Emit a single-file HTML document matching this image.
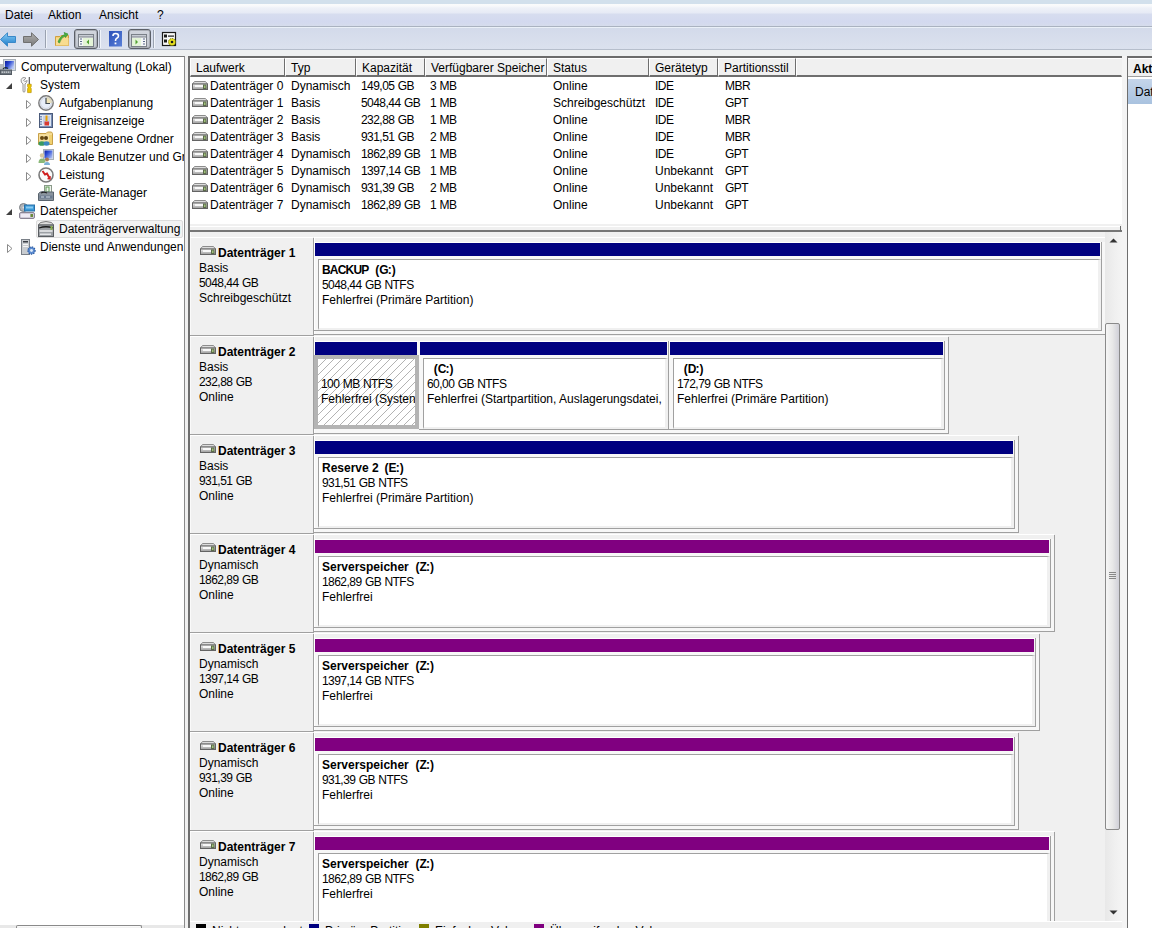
<!DOCTYPE html><html><head><meta charset="utf-8"><style>
*{margin:0;padding:0;box-sizing:border-box}
html,body{width:1152px;height:928px;overflow:hidden;background:#f0f0f0;font-family:"Liberation Sans", sans-serif;font-size:12px;color:#000}
.ab{position:absolute}
.t{position:absolute;white-space:nowrap;line-height:15px}
.b{font-weight:bold}
svg{position:absolute;overflow:visible}
</style></head><body>
<div class="ab" style="left:0px;top:0px;width:1152px;height:4px;background:#d2e0ec;"></div><div class="ab" style="left:0px;top:4px;width:1152px;height:22px;background:linear-gradient(#fafbfc 0px,#f8f9fb 2px,#eef1f8 4px,#e6eaf5 9px,#d7ddef 10px,#d3d9ef 18px,#d6dcec 22px);"></div><div class="ab" style="left:0px;top:26px;width:1152px;height:1px;background:#aab2c0;"></div><div class="ab" style="left:0px;top:27px;width:1152px;height:1px;background:#eaf0f8;"></div><div class="ab" style="left:0px;top:28px;width:1152px;height:21px;background:linear-gradient(#d3daea,#dbe1ee);"></div><div class="ab" style="left:0px;top:49px;width:1152px;height:1px;background:#b6becc;"></div><div class="ab" style="left:0px;top:50px;width:1152px;height:6px;background:#eef0f1;"></div><div class="t" style="left:5px;top:8px;">Datei</div><div class="t" style="left:48px;top:8px;">Aktion</div><div class="t" style="left:99px;top:8px;">Ansicht</div><div class="t" style="left:157px;top:8px;">?</div><svg style="left:0px;top:32px" width="16" height="15" viewBox="0 0 16 15"><defs><linearGradient id="bk" x1="0" y1="0" x2="0" y2="1"><stop offset="0" stop-color="#8ad0f8"/><stop offset="1" stop-color="#1a78c8"/></linearGradient></defs>
<path d="M0.5 7.5 L7.5 0.8 V4.5 H15.5 V10.5 H7.5 V14.2 Z" fill="url(#bk)" stroke="#3a88c8" stroke-width="1"/></svg><svg style="left:23px;top:32px" width="16" height="15" viewBox="0 0 16 15"><defs><linearGradient id="fw" x1="0" y1="0" x2="0" y2="1"><stop offset="0" stop-color="#b0b0b0"/><stop offset="1" stop-color="#7a7a7a"/></linearGradient></defs>
<path d="M15.5 7.5 L8.5 0.8 V4.5 H0.5 V10.5 H8.5 V14.2 Z" fill="url(#fw)" stroke="#707070" stroke-width="1"/></svg><div class="ab" style="left:45px;top:30px;width:1px;height:18px;background:#9aa2b0;box-shadow:1px 0 0 #f0f4fa"></div><svg style="left:55px;top:32px" width="14" height="14" viewBox="0 0 14 14"><path d="M0.5 4.5 H5 L6 3.5 H13.5 V13.5 H0.5 Z" fill="#f4d078" stroke="#d0a040"/>
<rect x="1" y="6" width="12.5" height="7.5" fill="#f8dc90"/>
<path d="M3 10 Q5 4 10 2.5 L9 0.5 L13 2 L10.5 5.5 L10 4 Q6 5.5 4.5 11 Z" fill="#4ab040" stroke="#2a8a2a" stroke-width="0.6"/></svg><div class="ab" style="left:74px;top:29px;width:24px;height:20px;background:linear-gradient(#d2d6de,#bfc4cd);border:1px solid #5c6068;border-radius:3px;box-shadow:inset 0 0 0 1px #a8acb4"></div><svg style="left:78px;top:34px" width="16" height="13" viewBox="0 0 16 13"><rect x="0.5" y="0.5" width="15" height="12" fill="#f4f6f8" stroke="#7a8088"/><rect x="0.5" y="0.5" width="15" height="2.5" fill="#c8ccd4" stroke="#7a8088"/>
<rect x="5" y="4" width="10" height="8" fill="#e4f4d8"/><path d="M8.5 8 L11 5.5 V10.5 Z" fill="#50a030"/>
<path d="M2 5 H4 M2 7.5 H4 M2 10 H4" stroke="#5a6a8a" stroke-width="1.2"/></svg><div class="ab" style="left:99px;top:30px;width:1px;height:18px;background:#9aa2b0;box-shadow:1px 0 0 #f0f4fa"></div><svg style="left:109px;top:31px" width="13" height="16" viewBox="0 0 13 16"><defs><linearGradient id="hl" x1="0" y1="0" x2="1" y2="1"><stop offset="0" stop-color="#2a50b8"/><stop offset="1" stop-color="#5a80d8"/></linearGradient></defs>
<rect x="0" y="0" width="13" height="15.5" fill="url(#hl)"/><path d="M4 5 Q4 2.5 6.5 2.5 Q9.5 2.5 9.5 5 Q9.5 6.5 7.5 7.5 Q6.5 8 6.5 10" fill="none" stroke="#fff" stroke-width="1.6"/><rect x="5.6" y="11.5" width="1.8" height="1.8" fill="#fff"/></svg><div class="ab" style="left:128px;top:29px;width:23px;height:20px;background:linear-gradient(#d2d6de,#bfc4cd);border:1px solid #5c6068;border-radius:3px;box-shadow:inset 0 0 0 1px #a8acb4"></div><svg style="left:131px;top:34px" width="16" height="13" viewBox="0 0 16 13"><rect x="0.5" y="0.5" width="15" height="12" fill="#f4f6f8" stroke="#7a8088"/><rect x="0.5" y="0.5" width="15" height="2.5" fill="#c8ccd4" stroke="#7a8088"/>
<rect x="1" y="4" width="9" height="8" fill="#e4f4d8"/><path d="M4.5 5.5 L7 8 L4.5 10.5 Z" fill="#50a030"/>
<path d="M12 5 H14 M12 7.5 H14 M12 10 H14" stroke="#5a6a8a" stroke-width="1.2"/></svg><div class="ab" style="left:153px;top:30px;width:1px;height:18px;background:#9aa2b0;box-shadow:1px 0 0 #f0f4fa"></div><svg style="left:162px;top:32px" width="15" height="15" viewBox="0 0 15 15"><rect x="0.5" y="0.5" width="13" height="13" fill="#f8f8f8" stroke="#1a1a1a" stroke-width="1.2"/>
<rect x="2" y="2.5" width="3" height="3" fill="#1a1a1a"/><rect x="6" y="3.5" width="6" height="1.2" fill="#1a1a1a"/>
<rect x="2" y="7.5" width="3" height="3" fill="#1a1a1a"/>
<circle cx="10" cy="10" r="3.5" fill="#e8e020" stroke="#6a6a00" stroke-width="1" stroke-dasharray="1.2 0.8"/><circle cx="10" cy="10" r="1.3" fill="#1a1a1a"/></svg><div class="ab" style="left:0px;top:56px;width:185px;height:872px;background:#fff;border-top:1px solid #7a7a7a;border-right:1px solid #8a8a8a"></div><div class="ab" style="left:36px;top:220px;width:147px;height:18px;background:#f3f3f3;border:1px solid #dcdcdc;border-radius:2px"></div><div class="ab" style="left:0;top:57px;width:184px;height:871px;overflow:hidden"><div class="t" style="left:21px;top:3px;">Computerverwaltung (Lokal)</div><svg style="left:0px;top:2px" width="16" height="16" viewBox="0 0 16 16"><defs><linearGradient id="scr" x1="0" y1="0" x2="1" y2="0.6"><stop offset="0" stop-color="#0c1c98"/><stop offset="0.45" stop-color="#2a48d0"/><stop offset="1" stop-color="#b8c8f4"/></linearGradient></defs>
<rect x="3.5" y="0.5" width="12" height="11" fill="#d4dce4" stroke="#a8b0b8"/>
<rect x="5" y="2" width="9" height="8" fill="url(#scr)"/>
<rect x="0" y="5" width="3" height="6" fill="#b8bcc0"/>
<path d="M3 10 Q5 7.5 8 9.5" fill="none" stroke="#1a2a30" stroke-width="1.2"/>
<rect x="0.5" y="11" width="11" height="4.5" fill="#6c747c" stroke="#545c64"/><path d="M1.5 13.2 H10.5" stroke="#d8dce0" stroke-width="1.2" stroke-dasharray="1.5 0.6"/></svg><div class="t" style="left:40px;top:21px;">System</div><svg style="left:20px;top:20px" width="16" height="16" viewBox="0 0 16 16"><path d="M2.5 0.8 Q0.3 2.5 1.3 5 Q2 6.3 3 7 V14.5 Q4 15.8 5 14.5 V7 Q7 5.8 7.2 3.5 L4.8 4.6 L3.6 3.2 L6 1.2 Q4.2 0 2.5 0.8 Z" fill="#f6f6f6" stroke="#8c8c8c" stroke-width="0.9"/>

<rect x="8.7" y="0" width="1.3" height="7.5" fill="#6a6a6a"/>
<path d="M7.6 7.2 H11.2 V9.6 L10.6 10.6 L11.2 11.6 V15.6 H7.6 V11.6 L8.2 10.6 L7.6 9.6 Z" fill="#f0c800" stroke="#b89000" stroke-width="0.7"/></svg><svg style="left:6px;top:26px" width="6" height="6"><path d="M6 0 L6 6 L0 6 Z" fill="#404040"/></svg><div class="t" style="left:59px;top:39px;">Aufgabenplanung</div><svg style="left:38px;top:38px" width="16" height="16" viewBox="0 0 16 16"><circle cx="8" cy="8" r="7.2" fill="#e8eef8" stroke="#7a7a7a" stroke-width="1.4"/>
<path d="M8 1.5 A6.5 6.5 0 0 1 14.5 8 L8 8 Z" fill="#f0e0a8" opacity="0.8"/>
<circle cx="8" cy="8" r="5.5" fill="none" stroke="#c8ccd4" stroke-width="0.8"/>
<path d="M8 3 V8.5 H12" fill="none" stroke="#404a50" stroke-width="1.2"/></svg><svg style="left:26px;top:43px" width="6" height="9"><path d="M0.5 0.5 L5 4.5 L0.5 8.5 Z" fill="#fff" stroke="#8a8a8a" stroke-width="1"/></svg><div class="t" style="left:59px;top:57px;">Ereignisanzeige</div><svg style="left:38px;top:56px" width="16" height="16" viewBox="0 0 16 16"><rect x="1.5" y="0.5" width="13" height="14" fill="#7a90b8" stroke="#4a5a7a"/>
<rect x="4" y="2" width="9" height="11" fill="#dfe6f2"/>
<path d="M2 2.5 H4 M2 5 H4 M2 7.5 H4 M2 10 H4 M2 12.5 H4" stroke="#e8ecf4" stroke-width="1"/>
<path d="M5 4 H12 M5 6 H12 M5 8 H12 M5 10 H12" stroke="#9aaad0" stroke-width="0.8"/>
<path d="M8.5 2.5 V8" stroke="#e8a000" stroke-width="2"/><rect x="6.5" y="8.5" width="4.5" height="4" fill="#d83a30"/></svg><svg style="left:26px;top:61px" width="6" height="9"><path d="M0.5 0.5 L5 4.5 L0.5 8.5 Z" fill="#fff" stroke="#8a8a8a" stroke-width="1"/></svg><div class="t" style="left:59px;top:75px;">Freigegebene Ordner</div><svg style="left:38px;top:74px" width="16" height="16" viewBox="0 0 16 16"><path d="M0.5 2.5 H8 L9.5 1 H13.5 L14.5 2.5 V13.5 H0.5 Z" fill="#f2d88c" stroke="#c8a048"/>
<rect x="1" y="3.5" width="13" height="9.5" fill="#f6e0a0"/><rect x="11" y="4" width="3" height="9" fill="#f0d070"/>
<circle cx="4" cy="7" r="2" fill="#6a4a10"/><circle cx="8" cy="7" r="2" fill="#5a4010"/>
<ellipse cx="3.8" cy="12.5" rx="3.3" ry="2.3" fill="#3a9a60"/><ellipse cx="8.5" cy="12.5" rx="3" ry="2.2" fill="#3a88c0"/></svg><svg style="left:26px;top:79px" width="6" height="9"><path d="M0.5 0.5 L5 4.5 L0.5 8.5 Z" fill="#fff" stroke="#8a8a8a" stroke-width="1"/></svg><div class="t" style="left:59px;top:93px;">Lokale Benutzer und Gruppen</div><svg style="left:38px;top:92px" width="16" height="16" viewBox="0 0 16 16"><defs><linearGradient id="scr2" x1="0" y1="0" x2="1" y2="0.8"><stop offset="0" stop-color="#0c1c98"/><stop offset="0.4" stop-color="#3050d8"/><stop offset="1" stop-color="#b0c0f0"/></linearGradient></defs>
<rect x="5.5" y="0.5" width="10" height="10" fill="#dfe4ea" stroke="#a8b0b8"/>
<rect x="6.5" y="1.5" width="8" height="8" fill="url(#scr2)"/>
<circle cx="4" cy="6.5" r="2.2" fill="#d8c8a0"/><path d="M0.5 14 Q0.5 9.5 4 9.5 Q7 9.5 7.5 13 L6 14 Z" fill="#8ab878"/>
<circle cx="9" cy="10.5" r="2" fill="#a87850"/><path d="M6 16 Q6 13 9 13 Q12 13 12 16 Z" fill="#7ab0d8"/></svg><svg style="left:26px;top:97px" width="6" height="9"><path d="M0.5 0.5 L5 4.5 L0.5 8.5 Z" fill="#fff" stroke="#8a8a8a" stroke-width="1"/></svg><div class="t" style="left:59px;top:111px;">Leistung</div><svg style="left:38px;top:110px" width="16" height="16" viewBox="0 0 16 16"><circle cx="8" cy="8" r="7" fill="#fafafa" stroke="#7a7a7a" stroke-width="1.6"/>
<path d="M4.5 4 L7 7.5 L9 6.5 L11.5 11" fill="none" stroke="#d02020" stroke-width="2"/>
<path d="M9.5 11.5 L12 12 L12 9" fill="none" stroke="#d02020" stroke-width="1.4"/></svg><svg style="left:26px;top:115px" width="6" height="9"><path d="M0.5 0.5 L5 4.5 L0.5 8.5 Z" fill="#fff" stroke="#8a8a8a" stroke-width="1"/></svg><div class="t" style="left:59px;top:129px;">Geräte-Manager</div><svg style="left:38px;top:128px" width="16" height="16" viewBox="0 0 16 16"><rect x="6.5" y="0.5" width="7" height="8" fill="#f0f4ee" stroke="#8a9a8a"/><rect x="8" y="2" width="3" height="5" fill="none" stroke="#5a9a50" stroke-width="1"/>
<path d="M0.5 8.5 Q3 5.5 8 7 H15.5 V15.5 H0.5 Z" fill="#8a949e" stroke="#5a646e"/>
<rect x="1.5" y="10.5" width="13" height="3" fill="#6a7a90"/><path d="M3 12 H6 M8 12 H12" stroke="#d0d8e0" stroke-width="1"/>
<path d="M3 8 Q6 6.5 9 8" fill="none" stroke="#202020" stroke-width="1.2"/></svg><div class="t" style="left:40px;top:147px;">Datenspeicher</div><svg style="left:19px;top:146px" width="16" height="16" viewBox="0 0 16 16"><circle cx="4.5" cy="4.5" r="4" fill="#b0b4b8" stroke="#7a7e84"/><circle cx="4.5" cy="4.5" r="1" fill="#e0e0e0"/>
<rect x="5.5" y="2" width="10" height="6" fill="#3a9ad8" stroke="#2a70a8"/><rect x="7" y="3.5" width="7" height="2" fill="#8acaf0"/>
<rect x="0.5" y="9.5" width="15" height="6" rx="1.5" fill="#cfcad8" stroke="#8a8494"/><rect x="2" y="11" width="9" height="3" fill="#eeeaf4"/><rect x="11.5" y="11" width="2.5" height="3" fill="#6a8a3a"/></svg><svg style="left:6px;top:152px" width="6" height="6"><path d="M6 0 L6 6 L0 6 Z" fill="#404040"/></svg><div class="t" style="left:59px;top:165px;">Datenträgerverwaltung</div><svg style="left:38px;top:164px" width="16" height="16" viewBox="0 0 16 16"><path d="M2.5 1.5 Q8 -0.5 13.5 1.5 L15.5 4 H0.5 Z" fill="#dcdcdc" stroke="#7a7a7a"/>
<rect x="0.5" y="4" width="15" height="11.5" fill="#9ca0a4" stroke="#5a5e62"/>
<path d="M1 7 Q8 4.5 15 7" fill="none" stroke="#1a1a1a" stroke-width="1.3"/>
<rect x="1.5" y="9" width="13" height="2" fill="#d8dadc"/><rect x="2" y="12.5" width="11" height="1.5" fill="#e4e6e8"/>
<rect x="12.5" y="5" width="2" height="4" fill="#8ab050"/></svg><div class="t" style="left:40px;top:183px;">Dienste und Anwendungen</div><svg style="left:20px;top:182px" width="16" height="16" viewBox="0 0 16 16"><rect x="1.5" y="0.5" width="8" height="15" fill="#c8ccd0" stroke="#7a8088"/>
<rect x="3" y="2" width="5" height="1.5" fill="#3a3e44"/><rect x="3" y="5" width="5" height="1" fill="#f4f4f4"/><rect x="3" y="7" width="5" height="1" fill="#f4f4f4"/>
<circle cx="11.5" cy="11.5" r="3.6" fill="#5a8ad0" stroke="#2a5aa0" stroke-width="1.2" stroke-dasharray="1.4 1"/><circle cx="11.5" cy="11.5" r="1.4" fill="#e0ecf8"/></svg><svg style="left:7px;top:187px" width="6" height="9"><path d="M0.5 0.5 L5 4.5 L0.5 8.5 Z" fill="#fff" stroke="#8a8a8a" stroke-width="1"/></svg></div><div class="ab" style="left:188px;top:56px;width:934px;height:872px;background:#f0f0f0;border-left:2px solid #6e6e6e"></div><div class="ab" style="left:190px;top:232px;width:1px;height:689px;background:#fafafa;"></div><div class="ab" style="left:188px;top:56px;width:934px;height:2px;background:#6b6b6b;"></div><div class="ab" style="left:190px;top:58px;width:932px;height:166px;background:#fff;"></div><div class="ab" style="left:190px;top:58px;width:95px;height:19px;background:#f0f0f0;border-top:1px solid #fff;border-left:1px solid #fff;border-right:1px solid #6e6e6e;border-bottom:2px solid #6e6e6e"></div><div class="t" style="left:196px;top:61px;">Laufwerk</div><div class="ab" style="left:285px;top:58px;width:71px;height:19px;background:#f0f0f0;border-top:1px solid #fff;border-left:1px solid #fff;border-right:1px solid #6e6e6e;border-bottom:2px solid #6e6e6e"></div><div class="t" style="left:291px;top:61px;">Typ</div><div class="ab" style="left:356px;top:58px;width:69px;height:19px;background:#f0f0f0;border-top:1px solid #fff;border-left:1px solid #fff;border-right:1px solid #6e6e6e;border-bottom:2px solid #6e6e6e"></div><div class="t" style="left:362px;top:61px;">Kapazität</div><div class="ab" style="left:425px;top:58px;width:122px;height:19px;background:#f0f0f0;border-top:1px solid #fff;border-left:1px solid #fff;border-right:1px solid #6e6e6e;border-bottom:2px solid #6e6e6e"></div><div class="t" style="left:431px;top:61px;">Verfügbarer Speicher</div><div class="ab" style="left:547px;top:58px;width:102px;height:19px;background:#f0f0f0;border-top:1px solid #fff;border-left:1px solid #fff;border-right:1px solid #6e6e6e;border-bottom:2px solid #6e6e6e"></div><div class="t" style="left:553px;top:61px;">Status</div><div class="ab" style="left:649px;top:58px;width:69px;height:19px;background:#f0f0f0;border-top:1px solid #fff;border-left:1px solid #fff;border-right:1px solid #6e6e6e;border-bottom:2px solid #6e6e6e"></div><div class="t" style="left:655px;top:61px;">Gerätetyp</div><div class="ab" style="left:718px;top:58px;width:78px;height:19px;background:#f0f0f0;border-top:1px solid #fff;border-left:1px solid #fff;border-right:1px solid #6e6e6e;border-bottom:2px solid #6e6e6e"></div><div class="t" style="left:724px;top:61px;">Partitionsstil</div><div class="ab" style="left:796px;top:58px;width:326px;height:19px;background:#f0f0f0;border-top:1px solid #fff;border-left:1px solid #fff;border-right:1px solid #f0f0f0;border-bottom:2px solid #6e6e6e"></div><svg style="left:192px;top:81px" width="16" height="10"><defs><linearGradient id="dg" x1="0" y1="0" x2="0" y2="1"><stop offset="0" stop-color="#f4f4f4"/><stop offset="1" stop-color="#9a9a9a"/></linearGradient></defs>
<path d="M2.5 0.5 H13.5 L15.5 3 H0.5 Z" fill="#dcdcdc" stroke="#8c8c8c"/>
<rect x="0.5" y="3" width="15" height="5.5" fill="url(#dg)" stroke="#646464"/>
<rect x="3" y="4" width="8" height="2" fill="#f8f8f8"/>
<rect x="11" y="3.5" width="3.5" height="4.5" fill="#5b6b4a"/><rect x="12" y="4.5" width="1.5" height="2.5" fill="#9fbf7a"/></svg><div class="t" style="left:210px;top:79px;">Datenträger <span style="letter-spacing:-0.55px">0</span></div><div class="t" style="left:291px;top:79px;">Dynamisch</div><div class="t" style="left:361px;top:79px;"><span style="letter-spacing:-0.55px">149,05</span> <span style="letter-spacing:-0.55px">GB</span></div><div class="t" style="left:430px;top:79px;"><span style="letter-spacing:-0.55px">3</span> <span style="letter-spacing:-0.55px">MB</span></div><div class="t" style="left:553px;top:79px;">Online</div><div class="t" style="left:655px;top:79px;"><span style="letter-spacing:-0.55px">IDE</span></div><div class="t" style="left:725px;top:79px;"><span style="letter-spacing:-0.55px">MBR</span></div><svg style="left:192px;top:98px" width="16" height="10"><defs><linearGradient id="dg" x1="0" y1="0" x2="0" y2="1"><stop offset="0" stop-color="#f4f4f4"/><stop offset="1" stop-color="#9a9a9a"/></linearGradient></defs>
<path d="M2.5 0.5 H13.5 L15.5 3 H0.5 Z" fill="#dcdcdc" stroke="#8c8c8c"/>
<rect x="0.5" y="3" width="15" height="5.5" fill="url(#dg)" stroke="#646464"/>
<rect x="3" y="4" width="8" height="2" fill="#f8f8f8"/>
<rect x="11" y="3.5" width="3.5" height="4.5" fill="#5b6b4a"/><rect x="12" y="4.5" width="1.5" height="2.5" fill="#9fbf7a"/></svg><div class="t" style="left:210px;top:96px;">Datenträger <span style="letter-spacing:-0.55px">1</span></div><div class="t" style="left:291px;top:96px;">Basis</div><div class="t" style="left:361px;top:96px;"><span style="letter-spacing:-0.55px">5048,44</span> <span style="letter-spacing:-0.55px">GB</span></div><div class="t" style="left:430px;top:96px;"><span style="letter-spacing:-0.55px">1</span> <span style="letter-spacing:-0.55px">MB</span></div><div class="t" style="left:553px;top:96px;">Schreibgeschützt</div><div class="t" style="left:655px;top:96px;"><span style="letter-spacing:-0.55px">IDE</span></div><div class="t" style="left:725px;top:96px;"><span style="letter-spacing:-0.55px">GPT</span></div><svg style="left:192px;top:115px" width="16" height="10"><defs><linearGradient id="dg" x1="0" y1="0" x2="0" y2="1"><stop offset="0" stop-color="#f4f4f4"/><stop offset="1" stop-color="#9a9a9a"/></linearGradient></defs>
<path d="M2.5 0.5 H13.5 L15.5 3 H0.5 Z" fill="#dcdcdc" stroke="#8c8c8c"/>
<rect x="0.5" y="3" width="15" height="5.5" fill="url(#dg)" stroke="#646464"/>
<rect x="3" y="4" width="8" height="2" fill="#f8f8f8"/>
<rect x="11" y="3.5" width="3.5" height="4.5" fill="#5b6b4a"/><rect x="12" y="4.5" width="1.5" height="2.5" fill="#9fbf7a"/></svg><div class="t" style="left:210px;top:113px;">Datenträger <span style="letter-spacing:-0.55px">2</span></div><div class="t" style="left:291px;top:113px;">Basis</div><div class="t" style="left:361px;top:113px;"><span style="letter-spacing:-0.55px">232,88</span> <span style="letter-spacing:-0.55px">GB</span></div><div class="t" style="left:430px;top:113px;"><span style="letter-spacing:-0.55px">1</span> <span style="letter-spacing:-0.55px">MB</span></div><div class="t" style="left:553px;top:113px;">Online</div><div class="t" style="left:655px;top:113px;"><span style="letter-spacing:-0.55px">IDE</span></div><div class="t" style="left:725px;top:113px;"><span style="letter-spacing:-0.55px">MBR</span></div><svg style="left:192px;top:132px" width="16" height="10"><defs><linearGradient id="dg" x1="0" y1="0" x2="0" y2="1"><stop offset="0" stop-color="#f4f4f4"/><stop offset="1" stop-color="#9a9a9a"/></linearGradient></defs>
<path d="M2.5 0.5 H13.5 L15.5 3 H0.5 Z" fill="#dcdcdc" stroke="#8c8c8c"/>
<rect x="0.5" y="3" width="15" height="5.5" fill="url(#dg)" stroke="#646464"/>
<rect x="3" y="4" width="8" height="2" fill="#f8f8f8"/>
<rect x="11" y="3.5" width="3.5" height="4.5" fill="#5b6b4a"/><rect x="12" y="4.5" width="1.5" height="2.5" fill="#9fbf7a"/></svg><div class="t" style="left:210px;top:130px;">Datenträger <span style="letter-spacing:-0.55px">3</span></div><div class="t" style="left:291px;top:130px;">Basis</div><div class="t" style="left:361px;top:130px;"><span style="letter-spacing:-0.55px">931,51</span> <span style="letter-spacing:-0.55px">GB</span></div><div class="t" style="left:430px;top:130px;"><span style="letter-spacing:-0.55px">2</span> <span style="letter-spacing:-0.55px">MB</span></div><div class="t" style="left:553px;top:130px;">Online</div><div class="t" style="left:655px;top:130px;"><span style="letter-spacing:-0.55px">IDE</span></div><div class="t" style="left:725px;top:130px;"><span style="letter-spacing:-0.55px">MBR</span></div><svg style="left:192px;top:149px" width="16" height="10"><defs><linearGradient id="dg" x1="0" y1="0" x2="0" y2="1"><stop offset="0" stop-color="#f4f4f4"/><stop offset="1" stop-color="#9a9a9a"/></linearGradient></defs>
<path d="M2.5 0.5 H13.5 L15.5 3 H0.5 Z" fill="#dcdcdc" stroke="#8c8c8c"/>
<rect x="0.5" y="3" width="15" height="5.5" fill="url(#dg)" stroke="#646464"/>
<rect x="3" y="4" width="8" height="2" fill="#f8f8f8"/>
<rect x="11" y="3.5" width="3.5" height="4.5" fill="#5b6b4a"/><rect x="12" y="4.5" width="1.5" height="2.5" fill="#9fbf7a"/></svg><div class="t" style="left:210px;top:147px;">Datenträger <span style="letter-spacing:-0.55px">4</span></div><div class="t" style="left:291px;top:147px;">Dynamisch</div><div class="t" style="left:361px;top:147px;"><span style="letter-spacing:-0.55px">1862,89</span> <span style="letter-spacing:-0.55px">GB</span></div><div class="t" style="left:430px;top:147px;"><span style="letter-spacing:-0.55px">1</span> <span style="letter-spacing:-0.55px">MB</span></div><div class="t" style="left:553px;top:147px;">Online</div><div class="t" style="left:655px;top:147px;"><span style="letter-spacing:-0.55px">IDE</span></div><div class="t" style="left:725px;top:147px;"><span style="letter-spacing:-0.55px">GPT</span></div><svg style="left:192px;top:166px" width="16" height="10"><defs><linearGradient id="dg" x1="0" y1="0" x2="0" y2="1"><stop offset="0" stop-color="#f4f4f4"/><stop offset="1" stop-color="#9a9a9a"/></linearGradient></defs>
<path d="M2.5 0.5 H13.5 L15.5 3 H0.5 Z" fill="#dcdcdc" stroke="#8c8c8c"/>
<rect x="0.5" y="3" width="15" height="5.5" fill="url(#dg)" stroke="#646464"/>
<rect x="3" y="4" width="8" height="2" fill="#f8f8f8"/>
<rect x="11" y="3.5" width="3.5" height="4.5" fill="#5b6b4a"/><rect x="12" y="4.5" width="1.5" height="2.5" fill="#9fbf7a"/></svg><div class="t" style="left:210px;top:164px;">Datenträger <span style="letter-spacing:-0.55px">5</span></div><div class="t" style="left:291px;top:164px;">Dynamisch</div><div class="t" style="left:361px;top:164px;"><span style="letter-spacing:-0.55px">1397,14</span> <span style="letter-spacing:-0.55px">GB</span></div><div class="t" style="left:430px;top:164px;"><span style="letter-spacing:-0.55px">1</span> <span style="letter-spacing:-0.55px">MB</span></div><div class="t" style="left:553px;top:164px;">Online</div><div class="t" style="left:655px;top:164px;">Unbekannt</div><div class="t" style="left:725px;top:164px;"><span style="letter-spacing:-0.55px">GPT</span></div><svg style="left:192px;top:183px" width="16" height="10"><defs><linearGradient id="dg" x1="0" y1="0" x2="0" y2="1"><stop offset="0" stop-color="#f4f4f4"/><stop offset="1" stop-color="#9a9a9a"/></linearGradient></defs>
<path d="M2.5 0.5 H13.5 L15.5 3 H0.5 Z" fill="#dcdcdc" stroke="#8c8c8c"/>
<rect x="0.5" y="3" width="15" height="5.5" fill="url(#dg)" stroke="#646464"/>
<rect x="3" y="4" width="8" height="2" fill="#f8f8f8"/>
<rect x="11" y="3.5" width="3.5" height="4.5" fill="#5b6b4a"/><rect x="12" y="4.5" width="1.5" height="2.5" fill="#9fbf7a"/></svg><div class="t" style="left:210px;top:181px;">Datenträger <span style="letter-spacing:-0.55px">6</span></div><div class="t" style="left:291px;top:181px;">Dynamisch</div><div class="t" style="left:361px;top:181px;"><span style="letter-spacing:-0.55px">931,39</span> <span style="letter-spacing:-0.55px">GB</span></div><div class="t" style="left:430px;top:181px;"><span style="letter-spacing:-0.55px">2</span> <span style="letter-spacing:-0.55px">MB</span></div><div class="t" style="left:553px;top:181px;">Online</div><div class="t" style="left:655px;top:181px;">Unbekannt</div><div class="t" style="left:725px;top:181px;"><span style="letter-spacing:-0.55px">GPT</span></div><svg style="left:192px;top:200px" width="16" height="10"><defs><linearGradient id="dg" x1="0" y1="0" x2="0" y2="1"><stop offset="0" stop-color="#f4f4f4"/><stop offset="1" stop-color="#9a9a9a"/></linearGradient></defs>
<path d="M2.5 0.5 H13.5 L15.5 3 H0.5 Z" fill="#dcdcdc" stroke="#8c8c8c"/>
<rect x="0.5" y="3" width="15" height="5.5" fill="url(#dg)" stroke="#646464"/>
<rect x="3" y="4" width="8" height="2" fill="#f8f8f8"/>
<rect x="11" y="3.5" width="3.5" height="4.5" fill="#5b6b4a"/><rect x="12" y="4.5" width="1.5" height="2.5" fill="#9fbf7a"/></svg><div class="t" style="left:210px;top:198px;">Datenträger <span style="letter-spacing:-0.55px">7</span></div><div class="t" style="left:291px;top:198px;">Dynamisch</div><div class="t" style="left:361px;top:198px;"><span style="letter-spacing:-0.55px">1862,89</span> <span style="letter-spacing:-0.55px">GB</span></div><div class="t" style="left:430px;top:198px;"><span style="letter-spacing:-0.55px">1</span> <span style="letter-spacing:-0.55px">MB</span></div><div class="t" style="left:553px;top:198px;">Online</div><div class="t" style="left:655px;top:198px;">Unbekannt</div><div class="t" style="left:725px;top:198px;"><span style="letter-spacing:-0.55px">GPT</span></div><div class="ab" style="left:190px;top:224px;width:932px;height:7px;background:#f0f0f0;"></div><div class="ab" style="left:190px;top:226px;width:931px;height:1px;background:#fff;"></div><div class="ab" style="left:190px;top:230px;width:932px;height:2px;background:#767676;"></div><div class="ab" style="left:1120px;top:226px;width:1px;height:5px;background:#6e6e6e;"></div><div class="ab" style="left:190px;top:232px;width:915px;height:689px;overflow:hidden"><div class="ab" style="left:0px;top:5px;width:123px;height:1px;background:#fff;"></div><div class="ab" style="left:0px;top:103px;width:124px;height:1px;background:#a0a0a0;"></div><div class="ab" style="left:123px;top:6px;width:1px;height:97px;background:#a0a0a0;"></div><svg style="left:10px;top:14px" width="16" height="10"><defs><linearGradient id="dg" x1="0" y1="0" x2="0" y2="1"><stop offset="0" stop-color="#f4f4f4"/><stop offset="1" stop-color="#9a9a9a"/></linearGradient></defs>
<path d="M2.5 0.5 H13.5 L15.5 3 H0.5 Z" fill="#dcdcdc" stroke="#8c8c8c"/>
<rect x="0.5" y="3" width="15" height="5.5" fill="url(#dg)" stroke="#646464"/>
<rect x="3" y="4" width="8" height="2" fill="#f8f8f8"/>
<rect x="11" y="3.5" width="3.5" height="4.5" fill="#5b6b4a"/><rect x="12" y="4.5" width="1.5" height="2.5" fill="#9fbf7a"/></svg><div class="t b" style="left:28px;top:14px;">Datenträger <span style="letter-spacing:-0.8px">1</span></div><div class="t" style="left:9px;top:29px;">Basis</div><div class="t" style="left:9px;top:44px;"><span style="letter-spacing:-0.55px">5048,44</span> <span style="letter-spacing:-0.55px">GB</span></div><div class="t" style="left:9px;top:59px;">Schreibgeschützt</div><div class="ab" style="left:124px;top:5px;width:791px;height:1px;background:#fff;"></div><div class="ab" style="left:124px;top:10px;width:791px;height:92px;background:#f7f7f7;"></div><div class="ab" style="left:124px;top:5px;width:1px;height:97px;background:#fff;"></div><div class="ab" style="left:915px;top:6px;width:1px;height:97px;background:#a0a0a0;"></div><div class="ab" style="left:124px;top:102px;width:792px;height:1px;background:#a0a0a0;"></div><div class="ab" style="left:124px;top:10px;width:787px;height:1px;background:#fff;"></div><div class="ab" style="left:125px;top:11px;width:785px;height:13px;background:#000080;"></div><div class="ab" style="left:911px;top:10px;width:1px;height:89px;background:#a0a0a0;"></div><div class="ab" style="left:124px;top:98px;width:788px;height:1px;background:#a0a0a0;"></div><div class="ab" style="left:128px;top:27px;width:783px;height:71px;background:#fff;border-top:1px solid #a0a0a0;border-left:1px solid #a0a0a0;border-right:3px solid #f0f0f0;border-bottom:2px solid #f0f0f0"></div><div class="ab" style="left:129px;top:28px;width:778px;height:66px;overflow:hidden"><div class="t b" style="left:3px;top:3px;"><span style="letter-spacing:-0.8px">BACKUP</span>&nbsp; (<span style="letter-spacing:-0.8px">G</span>:)</div><div class="t" style="left:3px;top:18px;"><span style="letter-spacing:-0.55px">5048,44</span> <span style="letter-spacing:-0.55px">GB</span> <span style="letter-spacing:-0.55px">NTFS</span></div><div class="t" style="left:3px;top:33px;">Fehlerfrei (Primäre Partition)</div></div><div class="ab" style="left:0px;top:104px;width:123px;height:1px;background:#fff;"></div><div class="ab" style="left:0px;top:202px;width:124px;height:1px;background:#a0a0a0;"></div><div class="ab" style="left:123px;top:105px;width:1px;height:97px;background:#a0a0a0;"></div><svg style="left:10px;top:113px" width="16" height="10"><defs><linearGradient id="dg" x1="0" y1="0" x2="0" y2="1"><stop offset="0" stop-color="#f4f4f4"/><stop offset="1" stop-color="#9a9a9a"/></linearGradient></defs>
<path d="M2.5 0.5 H13.5 L15.5 3 H0.5 Z" fill="#dcdcdc" stroke="#8c8c8c"/>
<rect x="0.5" y="3" width="15" height="5.5" fill="url(#dg)" stroke="#646464"/>
<rect x="3" y="4" width="8" height="2" fill="#f8f8f8"/>
<rect x="11" y="3.5" width="3.5" height="4.5" fill="#5b6b4a"/><rect x="12" y="4.5" width="1.5" height="2.5" fill="#9fbf7a"/></svg><div class="t b" style="left:28px;top:113px;">Datenträger <span style="letter-spacing:-0.8px">2</span></div><div class="t" style="left:9px;top:128px;">Basis</div><div class="t" style="left:9px;top:143px;"><span style="letter-spacing:-0.55px">232,88</span> <span style="letter-spacing:-0.55px">GB</span></div><div class="t" style="left:9px;top:158px;">Online</div><div class="ab" style="left:124px;top:104px;width:634px;height:1px;background:#fff;"></div><div class="ab" style="left:124px;top:109px;width:634px;height:92px;background:#f7f7f7;"></div><div class="ab" style="left:124px;top:104px;width:1px;height:97px;background:#fff;"></div><div class="ab" style="left:758px;top:105px;width:1px;height:97px;background:#a0a0a0;"></div><div class="ab" style="left:124px;top:201px;width:635px;height:1px;background:#a0a0a0;"></div><div class="ab" style="left:124px;top:109px;width:104px;height:1px;background:#fff;"></div><div class="ab" style="left:125px;top:110px;width:102px;height:13px;background:#000080;"></div><div class="ab" style="left:124px;top:123px;width:105px;height:74px;background:#b4b4b4;"></div><div class="ab" style="left:128px;top:127px;width:97px;height:66px;background:#fff;"></div><svg style="left:128px;top:127px" width="97" height="66"><defs><pattern id="hp" width="8" height="8" patternUnits="userSpaceOnUse"><path d="M0 8 L8 0" stroke="#a0a0a0" stroke-width="0.8"/></pattern></defs><rect width="97" height="66" fill="url(#hp)"/></svg><div class="ab" style="left:128px;top:127px;width:97px;height:66px;overflow:hidden"><div class="t b" style="left:3px;top:3px;"></div><div class="t" style="left:3px;top:18px;"><span style="letter-spacing:-0.55px">100</span> <span style="letter-spacing:-0.55px">MB</span> <span style="letter-spacing:-0.55px">NTFS</span></div><div class="t" style="left:3px;top:33px;">Fehlerfrei (Systen</div></div><div class="ab" style="left:229px;top:109px;width:249px;height:1px;background:#fff;"></div><div class="ab" style="left:230px;top:110px;width:247px;height:13px;background:#000080;"></div><div class="ab" style="left:478px;top:109px;width:1px;height:89px;background:#a0a0a0;"></div><div class="ab" style="left:229px;top:197px;width:250px;height:1px;background:#a0a0a0;"></div><div class="ab" style="left:233px;top:126px;width:245px;height:71px;background:#fff;border-top:1px solid #a0a0a0;border-left:1px solid #a0a0a0;border-right:3px solid #f0f0f0;border-bottom:2px solid #f0f0f0"></div><div class="ab" style="left:234px;top:127px;width:240px;height:66px;overflow:hidden"><div class="t b" style="left:3px;top:3px;">&nbsp;&nbsp;(<span style="letter-spacing:-0.8px">C</span>:)</div><div class="t" style="left:3px;top:18px;"><span style="letter-spacing:-0.55px">60,00</span> <span style="letter-spacing:-0.55px">GB</span> <span style="letter-spacing:-0.55px">NTFS</span></div><div class="t" style="left:3px;top:33px;">Fehlerfrei (Startpartition, Auslagerungsdatei,</div></div><div class="ab" style="left:479px;top:109px;width:275px;height:1px;background:#fff;"></div><div class="ab" style="left:480px;top:110px;width:273px;height:13px;background:#000080;"></div><div class="ab" style="left:754px;top:109px;width:1px;height:89px;background:#a0a0a0;"></div><div class="ab" style="left:479px;top:197px;width:276px;height:1px;background:#a0a0a0;"></div><div class="ab" style="left:483px;top:126px;width:271px;height:71px;background:#fff;border-top:1px solid #a0a0a0;border-left:1px solid #a0a0a0;border-right:3px solid #f0f0f0;border-bottom:2px solid #f0f0f0"></div><div class="ab" style="left:484px;top:127px;width:266px;height:66px;overflow:hidden"><div class="t b" style="left:3px;top:3px;">&nbsp;&nbsp;(<span style="letter-spacing:-0.8px">D</span>:)</div><div class="t" style="left:3px;top:18px;"><span style="letter-spacing:-0.55px">172,79</span> <span style="letter-spacing:-0.55px">GB</span> <span style="letter-spacing:-0.55px">NTFS</span></div><div class="t" style="left:3px;top:33px;">Fehlerfrei (Primäre Partition)</div></div><div class="ab" style="left:0px;top:203px;width:123px;height:1px;background:#fff;"></div><div class="ab" style="left:0px;top:301px;width:124px;height:1px;background:#a0a0a0;"></div><div class="ab" style="left:123px;top:204px;width:1px;height:97px;background:#a0a0a0;"></div><svg style="left:10px;top:212px" width="16" height="10"><defs><linearGradient id="dg" x1="0" y1="0" x2="0" y2="1"><stop offset="0" stop-color="#f4f4f4"/><stop offset="1" stop-color="#9a9a9a"/></linearGradient></defs>
<path d="M2.5 0.5 H13.5 L15.5 3 H0.5 Z" fill="#dcdcdc" stroke="#8c8c8c"/>
<rect x="0.5" y="3" width="15" height="5.5" fill="url(#dg)" stroke="#646464"/>
<rect x="3" y="4" width="8" height="2" fill="#f8f8f8"/>
<rect x="11" y="3.5" width="3.5" height="4.5" fill="#5b6b4a"/><rect x="12" y="4.5" width="1.5" height="2.5" fill="#9fbf7a"/></svg><div class="t b" style="left:28px;top:212px;">Datenträger <span style="letter-spacing:-0.8px">3</span></div><div class="t" style="left:9px;top:227px;">Basis</div><div class="t" style="left:9px;top:242px;"><span style="letter-spacing:-0.55px">931,51</span> <span style="letter-spacing:-0.55px">GB</span></div><div class="t" style="left:9px;top:257px;">Online</div><div class="ab" style="left:124px;top:203px;width:704px;height:1px;background:#fff;"></div><div class="ab" style="left:124px;top:208px;width:704px;height:92px;background:#f7f7f7;"></div><div class="ab" style="left:124px;top:203px;width:1px;height:97px;background:#fff;"></div><div class="ab" style="left:828px;top:204px;width:1px;height:97px;background:#a0a0a0;"></div><div class="ab" style="left:124px;top:300px;width:705px;height:1px;background:#a0a0a0;"></div><div class="ab" style="left:124px;top:208px;width:700px;height:1px;background:#fff;"></div><div class="ab" style="left:125px;top:209px;width:698px;height:13px;background:#000080;"></div><div class="ab" style="left:824px;top:208px;width:1px;height:89px;background:#a0a0a0;"></div><div class="ab" style="left:124px;top:296px;width:701px;height:1px;background:#a0a0a0;"></div><div class="ab" style="left:128px;top:225px;width:696px;height:71px;background:#fff;border-top:1px solid #a0a0a0;border-left:1px solid #a0a0a0;border-right:3px solid #f0f0f0;border-bottom:2px solid #f0f0f0"></div><div class="ab" style="left:129px;top:226px;width:691px;height:66px;overflow:hidden"><div class="t b" style="left:3px;top:3px;">Reserve <span style="letter-spacing:-0.8px">2</span>&nbsp; (<span style="letter-spacing:-0.8px">E</span>:)</div><div class="t" style="left:3px;top:18px;"><span style="letter-spacing:-0.55px">931,51</span> <span style="letter-spacing:-0.55px">GB</span> <span style="letter-spacing:-0.55px">NTFS</span></div><div class="t" style="left:3px;top:33px;">Fehlerfrei (Primäre Partition)</div></div><div class="ab" style="left:0px;top:302px;width:123px;height:1px;background:#fff;"></div><div class="ab" style="left:0px;top:400px;width:124px;height:1px;background:#a0a0a0;"></div><div class="ab" style="left:123px;top:303px;width:1px;height:97px;background:#a0a0a0;"></div><svg style="left:10px;top:311px" width="16" height="10"><defs><linearGradient id="dg" x1="0" y1="0" x2="0" y2="1"><stop offset="0" stop-color="#f4f4f4"/><stop offset="1" stop-color="#9a9a9a"/></linearGradient></defs>
<path d="M2.5 0.5 H13.5 L15.5 3 H0.5 Z" fill="#dcdcdc" stroke="#8c8c8c"/>
<rect x="0.5" y="3" width="15" height="5.5" fill="url(#dg)" stroke="#646464"/>
<rect x="3" y="4" width="8" height="2" fill="#f8f8f8"/>
<rect x="11" y="3.5" width="3.5" height="4.5" fill="#5b6b4a"/><rect x="12" y="4.5" width="1.5" height="2.5" fill="#9fbf7a"/></svg><div class="t b" style="left:28px;top:311px;">Datenträger <span style="letter-spacing:-0.8px">4</span></div><div class="t" style="left:9px;top:326px;">Dynamisch</div><div class="t" style="left:9px;top:341px;"><span style="letter-spacing:-0.55px">1862,89</span> <span style="letter-spacing:-0.55px">GB</span></div><div class="t" style="left:9px;top:356px;">Online</div><div class="ab" style="left:124px;top:302px;width:740px;height:1px;background:#fff;"></div><div class="ab" style="left:124px;top:307px;width:740px;height:92px;background:#f7f7f7;"></div><div class="ab" style="left:124px;top:302px;width:1px;height:97px;background:#fff;"></div><div class="ab" style="left:864px;top:303px;width:1px;height:97px;background:#a0a0a0;"></div><div class="ab" style="left:124px;top:399px;width:741px;height:1px;background:#a0a0a0;"></div><div class="ab" style="left:124px;top:307px;width:736px;height:1px;background:#fff;"></div><div class="ab" style="left:125px;top:308px;width:734px;height:13px;background:#800080;"></div><div class="ab" style="left:860px;top:307px;width:1px;height:89px;background:#a0a0a0;"></div><div class="ab" style="left:124px;top:395px;width:737px;height:1px;background:#a0a0a0;"></div><div class="ab" style="left:128px;top:324px;width:732px;height:71px;background:#fff;border-top:1px solid #a0a0a0;border-left:1px solid #a0a0a0;border-right:3px solid #f0f0f0;border-bottom:2px solid #f0f0f0"></div><div class="ab" style="left:129px;top:325px;width:727px;height:66px;overflow:hidden"><div class="t b" style="left:3px;top:3px;">Serverspeicher&nbsp; (<span style="letter-spacing:-0.8px">Z</span>:)</div><div class="t" style="left:3px;top:18px;"><span style="letter-spacing:-0.55px">1862,89</span> <span style="letter-spacing:-0.55px">GB</span> <span style="letter-spacing:-0.55px">NTFS</span></div><div class="t" style="left:3px;top:33px;">Fehlerfrei</div></div><div class="ab" style="left:0px;top:401px;width:123px;height:1px;background:#fff;"></div><div class="ab" style="left:0px;top:499px;width:124px;height:1px;background:#a0a0a0;"></div><div class="ab" style="left:123px;top:402px;width:1px;height:97px;background:#a0a0a0;"></div><svg style="left:10px;top:410px" width="16" height="10"><defs><linearGradient id="dg" x1="0" y1="0" x2="0" y2="1"><stop offset="0" stop-color="#f4f4f4"/><stop offset="1" stop-color="#9a9a9a"/></linearGradient></defs>
<path d="M2.5 0.5 H13.5 L15.5 3 H0.5 Z" fill="#dcdcdc" stroke="#8c8c8c"/>
<rect x="0.5" y="3" width="15" height="5.5" fill="url(#dg)" stroke="#646464"/>
<rect x="3" y="4" width="8" height="2" fill="#f8f8f8"/>
<rect x="11" y="3.5" width="3.5" height="4.5" fill="#5b6b4a"/><rect x="12" y="4.5" width="1.5" height="2.5" fill="#9fbf7a"/></svg><div class="t b" style="left:28px;top:410px;">Datenträger <span style="letter-spacing:-0.8px">5</span></div><div class="t" style="left:9px;top:425px;">Dynamisch</div><div class="t" style="left:9px;top:440px;"><span style="letter-spacing:-0.55px">1397,14</span> <span style="letter-spacing:-0.55px">GB</span></div><div class="t" style="left:9px;top:455px;">Online</div><div class="ab" style="left:124px;top:401px;width:725px;height:1px;background:#fff;"></div><div class="ab" style="left:124px;top:406px;width:725px;height:92px;background:#f7f7f7;"></div><div class="ab" style="left:124px;top:401px;width:1px;height:97px;background:#fff;"></div><div class="ab" style="left:849px;top:402px;width:1px;height:97px;background:#a0a0a0;"></div><div class="ab" style="left:124px;top:498px;width:726px;height:1px;background:#a0a0a0;"></div><div class="ab" style="left:124px;top:406px;width:721px;height:1px;background:#fff;"></div><div class="ab" style="left:125px;top:407px;width:719px;height:13px;background:#800080;"></div><div class="ab" style="left:845px;top:406px;width:1px;height:89px;background:#a0a0a0;"></div><div class="ab" style="left:124px;top:494px;width:722px;height:1px;background:#a0a0a0;"></div><div class="ab" style="left:128px;top:423px;width:717px;height:71px;background:#fff;border-top:1px solid #a0a0a0;border-left:1px solid #a0a0a0;border-right:3px solid #f0f0f0;border-bottom:2px solid #f0f0f0"></div><div class="ab" style="left:129px;top:424px;width:712px;height:66px;overflow:hidden"><div class="t b" style="left:3px;top:3px;">Serverspeicher&nbsp; (<span style="letter-spacing:-0.8px">Z</span>:)</div><div class="t" style="left:3px;top:18px;"><span style="letter-spacing:-0.55px">1397,14</span> <span style="letter-spacing:-0.55px">GB</span> <span style="letter-spacing:-0.55px">NTFS</span></div><div class="t" style="left:3px;top:33px;">Fehlerfrei</div></div><div class="ab" style="left:0px;top:500px;width:123px;height:1px;background:#fff;"></div><div class="ab" style="left:0px;top:598px;width:124px;height:1px;background:#a0a0a0;"></div><div class="ab" style="left:123px;top:501px;width:1px;height:97px;background:#a0a0a0;"></div><svg style="left:10px;top:509px" width="16" height="10"><defs><linearGradient id="dg" x1="0" y1="0" x2="0" y2="1"><stop offset="0" stop-color="#f4f4f4"/><stop offset="1" stop-color="#9a9a9a"/></linearGradient></defs>
<path d="M2.5 0.5 H13.5 L15.5 3 H0.5 Z" fill="#dcdcdc" stroke="#8c8c8c"/>
<rect x="0.5" y="3" width="15" height="5.5" fill="url(#dg)" stroke="#646464"/>
<rect x="3" y="4" width="8" height="2" fill="#f8f8f8"/>
<rect x="11" y="3.5" width="3.5" height="4.5" fill="#5b6b4a"/><rect x="12" y="4.5" width="1.5" height="2.5" fill="#9fbf7a"/></svg><div class="t b" style="left:28px;top:509px;">Datenträger <span style="letter-spacing:-0.8px">6</span></div><div class="t" style="left:9px;top:524px;">Dynamisch</div><div class="t" style="left:9px;top:539px;"><span style="letter-spacing:-0.55px">931,39</span> <span style="letter-spacing:-0.55px">GB</span></div><div class="t" style="left:9px;top:554px;">Online</div><div class="ab" style="left:124px;top:500px;width:704px;height:1px;background:#fff;"></div><div class="ab" style="left:124px;top:505px;width:704px;height:92px;background:#f7f7f7;"></div><div class="ab" style="left:124px;top:500px;width:1px;height:97px;background:#fff;"></div><div class="ab" style="left:828px;top:501px;width:1px;height:97px;background:#a0a0a0;"></div><div class="ab" style="left:124px;top:597px;width:705px;height:1px;background:#a0a0a0;"></div><div class="ab" style="left:124px;top:505px;width:700px;height:1px;background:#fff;"></div><div class="ab" style="left:125px;top:506px;width:698px;height:13px;background:#800080;"></div><div class="ab" style="left:824px;top:505px;width:1px;height:89px;background:#a0a0a0;"></div><div class="ab" style="left:124px;top:593px;width:701px;height:1px;background:#a0a0a0;"></div><div class="ab" style="left:128px;top:522px;width:696px;height:71px;background:#fff;border-top:1px solid #a0a0a0;border-left:1px solid #a0a0a0;border-right:3px solid #f0f0f0;border-bottom:2px solid #f0f0f0"></div><div class="ab" style="left:129px;top:523px;width:691px;height:66px;overflow:hidden"><div class="t b" style="left:3px;top:3px;">Serverspeicher&nbsp; (<span style="letter-spacing:-0.8px">Z</span>:)</div><div class="t" style="left:3px;top:18px;"><span style="letter-spacing:-0.55px">931,39</span> <span style="letter-spacing:-0.55px">GB</span> <span style="letter-spacing:-0.55px">NTFS</span></div><div class="t" style="left:3px;top:33px;">Fehlerfrei</div></div><div class="ab" style="left:0px;top:599px;width:123px;height:1px;background:#fff;"></div><div class="ab" style="left:0px;top:697px;width:124px;height:1px;background:#a0a0a0;"></div><div class="ab" style="left:123px;top:600px;width:1px;height:97px;background:#a0a0a0;"></div><svg style="left:10px;top:608px" width="16" height="10"><defs><linearGradient id="dg" x1="0" y1="0" x2="0" y2="1"><stop offset="0" stop-color="#f4f4f4"/><stop offset="1" stop-color="#9a9a9a"/></linearGradient></defs>
<path d="M2.5 0.5 H13.5 L15.5 3 H0.5 Z" fill="#dcdcdc" stroke="#8c8c8c"/>
<rect x="0.5" y="3" width="15" height="5.5" fill="url(#dg)" stroke="#646464"/>
<rect x="3" y="4" width="8" height="2" fill="#f8f8f8"/>
<rect x="11" y="3.5" width="3.5" height="4.5" fill="#5b6b4a"/><rect x="12" y="4.5" width="1.5" height="2.5" fill="#9fbf7a"/></svg><div class="t b" style="left:28px;top:608px;">Datenträger <span style="letter-spacing:-0.8px">7</span></div><div class="t" style="left:9px;top:623px;">Dynamisch</div><div class="t" style="left:9px;top:638px;"><span style="letter-spacing:-0.55px">1862,89</span> <span style="letter-spacing:-0.55px">GB</span></div><div class="t" style="left:9px;top:653px;">Online</div><div class="ab" style="left:124px;top:599px;width:740px;height:1px;background:#fff;"></div><div class="ab" style="left:124px;top:604px;width:740px;height:92px;background:#f7f7f7;"></div><div class="ab" style="left:124px;top:599px;width:1px;height:97px;background:#fff;"></div><div class="ab" style="left:864px;top:600px;width:1px;height:97px;background:#a0a0a0;"></div><div class="ab" style="left:124px;top:696px;width:741px;height:1px;background:#a0a0a0;"></div><div class="ab" style="left:124px;top:604px;width:736px;height:1px;background:#fff;"></div><div class="ab" style="left:125px;top:605px;width:734px;height:13px;background:#800080;"></div><div class="ab" style="left:860px;top:604px;width:1px;height:89px;background:#a0a0a0;"></div><div class="ab" style="left:124px;top:692px;width:737px;height:1px;background:#a0a0a0;"></div><div class="ab" style="left:128px;top:621px;width:732px;height:71px;background:#fff;border-top:1px solid #a0a0a0;border-left:1px solid #a0a0a0;border-right:3px solid #f0f0f0;border-bottom:2px solid #f0f0f0"></div><div class="ab" style="left:129px;top:622px;width:727px;height:66px;overflow:hidden"><div class="t b" style="left:3px;top:3px;">Serverspeicher&nbsp; (<span style="letter-spacing:-0.8px">Z</span>:)</div><div class="t" style="left:3px;top:18px;"><span style="letter-spacing:-0.55px">1862,89</span> <span style="letter-spacing:-0.55px">GB</span> <span style="letter-spacing:-0.55px">NTFS</span></div><div class="t" style="left:3px;top:33px;">Fehlerfrei</div></div></div><div class="ab" style="left:190px;top:921px;width:932px;height:7px;background:#f0f0f0;border-top:1px solid #fff"></div><div class="ab" style="left:196px;top:924px;width:10px;height:10px;background:#000;"></div><div class="t" style="left:212px;top:924px;">Nicht zugeordnet</div><div class="ab" style="left:309px;top:924px;width:10px;height:10px;background:#000080;"></div><div class="t" style="left:325px;top:924px;">Primäre Partition</div><div class="ab" style="left:419px;top:924px;width:10px;height:10px;background:#808000;"></div><div class="t" style="left:435px;top:924px;">Einfaches Volume</div><div class="ab" style="left:534px;top:924px;width:10px;height:10px;background:#800080;"></div><div class="t" style="left:550px;top:924px;">Übergreifendes Volume</div><div class="ab" style="left:1105px;top:232px;width:17px;height:689px;background:linear-gradient(90deg,#e8e8e8,#f0f0f0 60%,#f4f4f4);"></div><svg style="left:1109px;top:238px" width="9" height="6"><path d="M0.5 4.5 L4.5 0.5 L8.5 4.5 Z" fill="#333"/></svg><svg style="left:1109px;top:910px" width="9" height="6"><path d="M0.5 0.5 L4.5 4.5 L8.5 0.5 Z" fill="#333"/></svg><div class="ab" style="left:1105px;top:323px;width:15px;height:507px;background:linear-gradient(90deg,#f6f6f6,#e8e8e8 50%,#d0d0d8);border:1px solid #8a8a8a;border-radius:2px"></div><svg style="left:1109px;top:572px" width="7" height="7"><path d="M0 0.5H7M0 2.5H7M0 4.5H7M0 6.5H7" stroke="#888" stroke-width="1"/></svg><div class="ab" style="left:0px;top:925px;width:184px;height:3px;background:#e8e8e8;"></div><div class="ab" style="left:16px;top:925px;width:126px;height:3px;background:linear-gradient(#fdfdfd,#eeeeee);border:1px solid #8a8a8a;border-bottom:none;border-radius:2px 2px 0 0"></div><div class="ab" style="left:1122px;top:56px;width:5px;height:872px;background:#f4f4f4;"></div><div class="ab" style="left:1127px;top:56px;width:25px;height:872px;background:#fff;border-left:1px solid #6e6e6e;border-top:2px solid #6b6b6b"></div><div class="ab" style="left:1128px;top:58px;width:24px;height:19px;background:#f0f0f0;border-top:1px solid #fff;border-bottom:1px solid #a0a0a0"></div><div class="t b" style="left:1133px;top:62px;">Aktionen</div><div class="ab" style="left:1128px;top:79px;width:24px;height:25px;background:linear-gradient(#c5d5ea,#a9c2df);"></div><div class="t" style="left:1135px;top:85px;">Datenträgerverwaltung</div></body></html>
